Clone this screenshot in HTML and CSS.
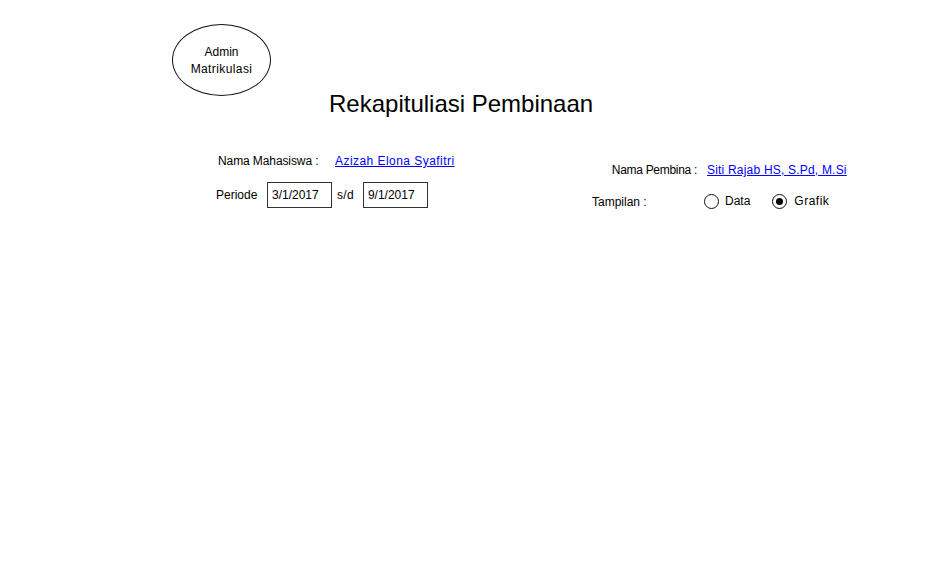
FILE: index.html
```html
<!DOCTYPE html>
<html>
<head>
<meta charset="utf-8">
<link rel="stylesheet" href="styles.css">
</head>
<body>
<div class="header">
  <div class="bubble"><span>Admin</span><span>Matrikulasi</span></div>
  <h1 class="title">Rekapituliasi Pembinaan</h1>
</div>
<div class="form">
  <div class="col-left">
    <div class="row row-name">
      <span class="lbl lbl-mhs">Nama Mahasiswa :</span>
      <a class="link link-mhs" href="#">Azizah Elona Syafitri</a>
    </div>
    <div class="row row-period">
      <span class="lbl lbl-period">Periode</span>
      <span class="box">3/1/2017</span>
      <span class="sd">s/d</span>
      <span class="box">9/1/2017</span>
    </div>
  </div>
  <div class="col-right">
    <div class="row row-pembina">
      <span class="lbl lbl-pembina">Nama Pembina :</span>
      <a class="link link-pembina" href="#">Siti Rajab HS, S.Pd, M.Si</a>
    </div>
    <div class="row row-view">
      <span class="lbl lbl-view">Tampilan :</span>
      <span class="radio"></span><span class="opt">Data</span>
      <span class="radio on"></span><span class="opt opt-grafik">Grafik</span>
    </div>
  </div>
</div>
</body>
</html>
```
FILE: styles.css
```css
* { box-sizing: border-box; }
body {
  margin: 0;
  width: 948px;
  height: 564px;
  background: #fff;
  color: #000;
  font-family: "Comic Sans MS", "Liberation Sans", Arial, sans-serif;
  font-size: 12px;
}
.header {
  display: flex;
  padding: 24px 0 0 172px;
}
.bubble {
  width: 99px;
  height: 72px;
  border: 1.3px solid #111;
  border-radius: 50%;
  display: flex;
  flex-direction: column;
  align-items: center;
  justify-content: center;
  font-size: 12px;
  line-height: 17px;
  padding-top: 2px;
}
.bubble span:last-child { letter-spacing: 0.4px; }
.title {
  margin: 66px 0 0 58px;
  font-size: 24px;
  font-weight: normal;
  line-height: 28px;
}
.form {
  display: flex;
  margin-top: 33px;
  padding-left: 216px;
}
.col-left {
  width: 376px;
  display: flex;
  flex-direction: column;
  gap: 11px;
}
.col-right {
  display: flex;
  flex-direction: column;
  gap: 11px;
  padding-top: 9px;
}
.row {
  display: flex;
  align-items: center;
  height: 20px;
}
.row-period { height: 26px; }
.lbl { white-space: nowrap; }
.lbl-mhs { width: 119px; padding-left: 2px; letter-spacing: -0.1px; }
.lbl-period { width: 51px; }
.lbl-pembina { width: 115px; text-align: right; padding-right: 10px; letter-spacing: -0.3px; }
.lbl-view { width: 112px; padding-top: 1px; }
.link {
  color: #0000ff;
  text-decoration: underline;
}
.link-mhs { letter-spacing: 0.45px; }
.link-pembina { letter-spacing: 0.2px; }
.box {
  width: 65px;
  height: 26px;
  border: 1.5px solid #333;
  padding: 4px 0 0 4px;
  line-height: 16px;
}
.sd { margin: 0 9px 0 5px; letter-spacing: 0.3px; }
.radio {
  width: 15px;
  height: 15px;
  border: 1px solid #111;
  border-radius: 50%;
  margin-right: 6px;
  display: flex;
  align-items: center;
  justify-content: center;
}
.radio.on::after {
  content: "";
  width: 7px;
  height: 7px;
  border-radius: 50%;
  background: #000;
}
.opt + .radio { margin-left: 22px; }
.opt-grafik { letter-spacing: 0.5px; margin-left: 1px; }
```
